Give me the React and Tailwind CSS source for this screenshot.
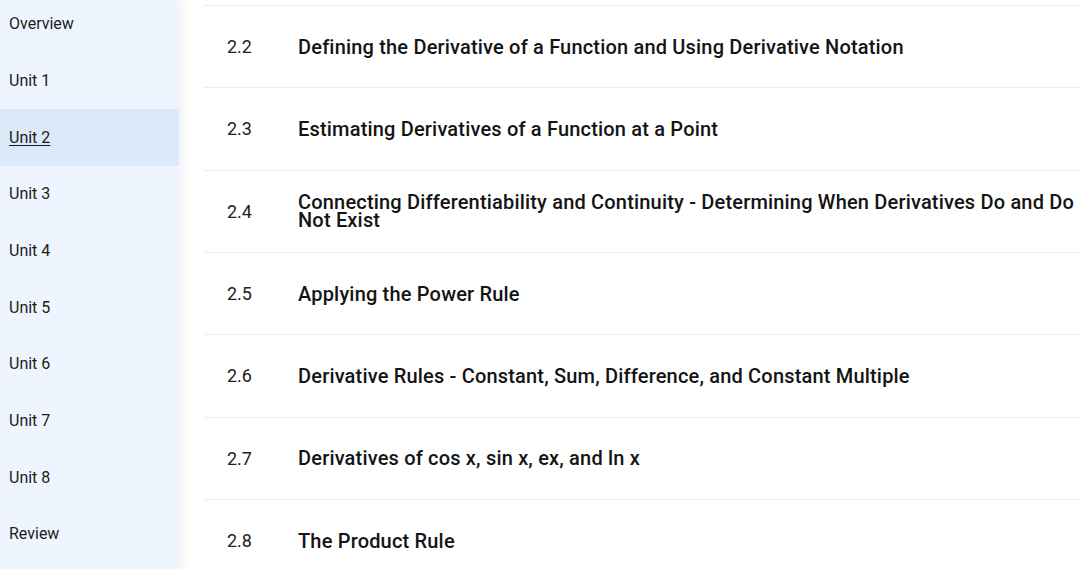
const units = [
  "Overview",
  "Unit 1",
  "Unit 2",
  "Unit 3",
  "Unit 4",
  "Unit 5",
  "Unit 6",
  "Unit 7",
  "Unit 8",
  "Review",
];

const topics = [
  { num: "2.2", title: "Defining the Derivative of a Function and Using Derivative Notation" },
  { num: "2.3", title: "Estimating Derivatives of a Function at a Point" },
  {
    num: "2.4",
    title:
      "Connecting Differentiability and Continuity - Determining When Derivatives Do and Do Not Exist",
  },
  { num: "2.5", title: "Applying the Power Rule" },
  { num: "2.6", title: "Derivative Rules - Constant, Sum, Difference, and Constant Multiple" },
  { num: "2.7", title: "Derivatives of cos x, sin x, ex, and ln x" },
  { num: "2.8", title: "The Product Rule" },
];

const App = () => {
  return (
    <div className="flex h-[569px] w-[1080px] overflow-hidden bg-white font-['Roboto',sans-serif] text-[#1c1c1c]">
      <aside className="relative z-10 w-[179px] shrink-0 bg-[#eef5fe] shadow-[4px_0_10px_rgba(0,0,0,0.06)]">
        <ul className="-mt-[4px]">
          {units.map((u) => (
            <li
              key={u}
              className={`flex h-[56.67px] items-center px-[9px] text-[16px] ${
                u === "Unit 2" ? "bg-[#dce9f8] underline underline-offset-2" : ""
              }`}
            >
              {u}
            </li>
          ))}
        </ul>
      </aside>
      <main className="min-w-0 flex-1 pl-[25px] pt-[5px]">
        {topics.map((t) => (
          <div
            key={t.num}
            className="flex h-[82.33px] items-center border-t border-[#ececec]"
          >
            <span className="w-[94px] shrink-0 pl-[23px] text-[18px] text-[#222]">
              {t.num}
            </span>
            <span className="pr-[4px] text-[20px] font-medium leading-[18px] tracking-[0.18px] text-[#141414]">
              {t.title}
            </span>
          </div>
        ))}
      </main>
    </div>
  );
};

export default App;
